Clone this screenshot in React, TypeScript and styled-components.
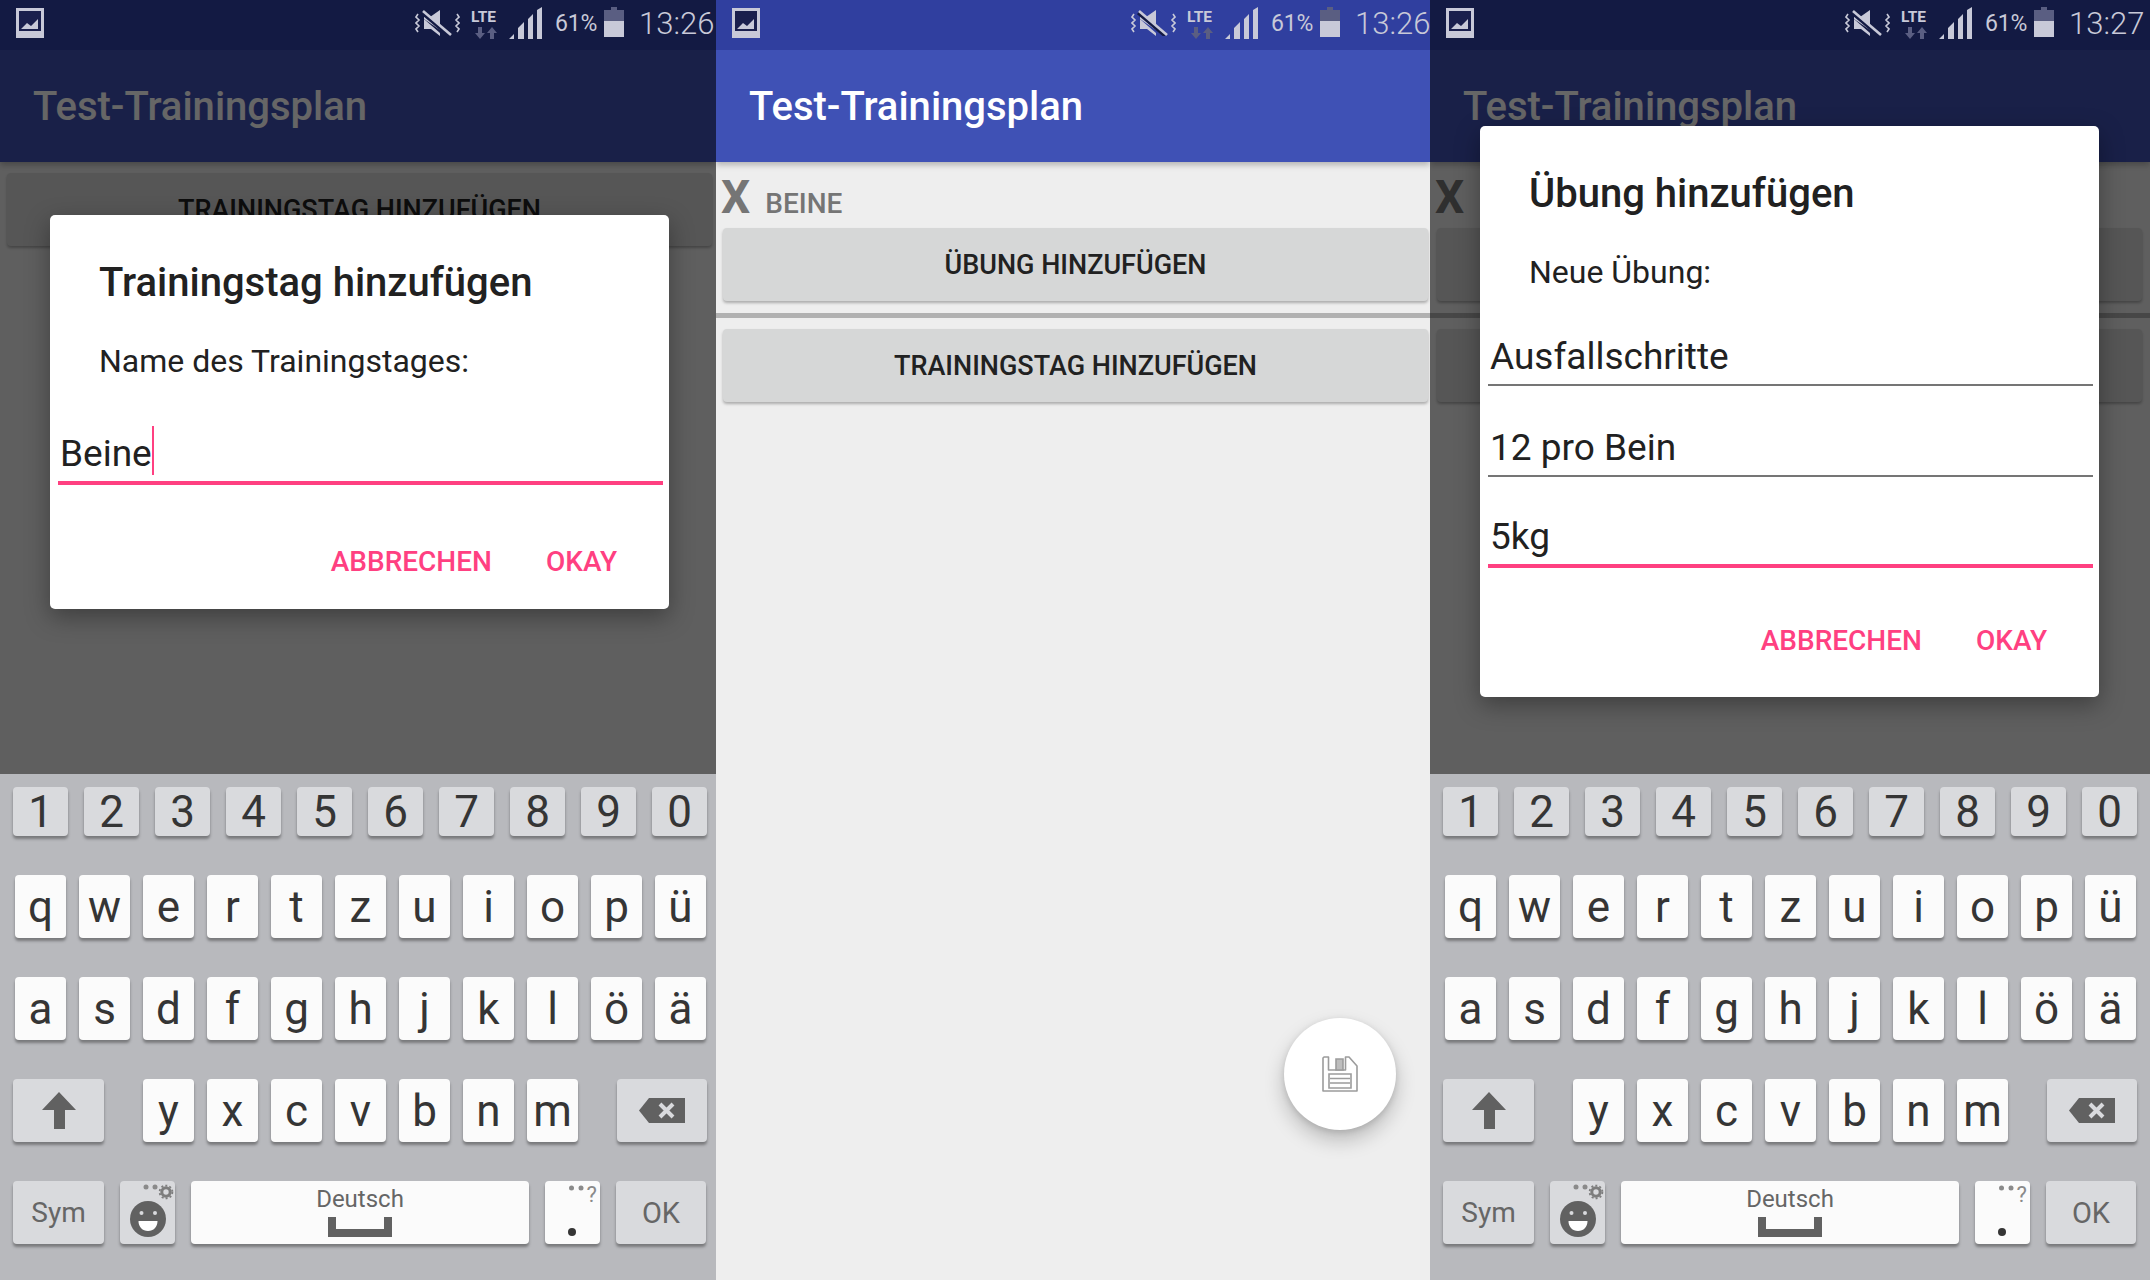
import React from "react";
import styled, { createGlobalStyle } from "styled-components";

const GlobalStyle = createGlobalStyle`
  html, body {
    margin: 0;
    padding: 0;
    background: #eeeeee;
  }
  * {
    box-sizing: border-box;
  }
`;

const PINK = "#ff4081";
const ICON = "#c8c9d8";
const ICON_DIM = "#5a5e82";
const KEY_ICON = "#616161";

const Page = styled.div`
  display: grid;
  grid-template-columns: 716px 714px 720px;
  width: 2150px;
  height: 1280px;
  overflow: hidden;
  font-family: Roboto, "Liberation Sans", sans-serif;
`;

const Phone = styled.div`
  display: flex;
  flex-direction: column;
  height: 1280px;
  overflow: hidden;
  background: #b8b9bd;
`;

const StatusBar = styled.div<{ $dim?: boolean }>`
  flex: 0 0 50px;
  display: flex;
  align-items: flex-start;
  width: 100%;
  padding-left: 16px;
  background: ${(p) => (p.$dim ? "#131a43" : "#303f9f")};
`;

const StatusRight = styled.div`
  display: flex;
  align-items: flex-start;
  width: 302px;
  margin-left: 371px;
  flex: none;
`;

const StatusIcon = styled.svg<{ $w: number; $h: number; $top: number; $left: number }>`
  flex: none;
  display: block;
  width: ${(p) => p.$w}px;
  height: ${(p) => p.$h}px;
  margin-top: ${(p) => p.$top}px;
  margin-left: ${(p) => p.$left}px;
`;

const Battery = styled.span`
  color: ${ICON};
  font-size: 23px;
  line-height: 27px;
  margin: 10px 0 0 13px;
  letter-spacing: -0.2px;
`;

const Clock = styled.span`
  color: ${ICON};
  font-size: 31px;
  font-weight: 300;
  line-height: 36px;
  margin: 6px 0 0 15px;
`;

const Screen = styled.div<{ $full?: boolean }>`
  position: relative;
  height: ${(p) => (p.$full ? 1230 : 724)}px;
  flex: none;
  overflow: hidden;
  background: #eeeeee;
`;

const AppBar = styled.div`
  height: 112px;
  padding-left: 33px;
  display: flex;
  align-items: center;
  background: #3f51b5;
  color: #ffffff;
  font-size: 40px;
  font-weight: 500;
  box-shadow: 0 3px 6px rgba(0, 0, 0, 0.25);
`;

const DayHeader = styled.div`
  height: 66px;
  padding: 0 0 0 5px;
  display: flex;
  align-items: flex-start;
  color: #757575;
  font-weight: 500;
`;

const RemoveMark = styled.span`
  font-size: 46px;
  font-weight: 700;
  line-height: 54px;
  margin-top: 8px;
`;

const DayName = styled.span`
  font-size: 28px;
  line-height: 32px;
  margin: 26px 0 0 15px;
`;

const Section = styled.div`
  padding: 0 4px 0 7px;
  width: 716px;
`;

const WideButton = styled.div`
  height: 73px;
  display: flex;
  align-items: center;
  justify-content: center;
  border-radius: 4px;
  background: #d6d7d7;
  color: #212121;
  font-size: 27px;
  font-weight: 500;
  box-shadow: 0 2px 3px rgba(0, 0, 0, 0.28);
`;

const Rule = styled.div`
  height: 5px;
  margin: 12px 0 11px;
  background: #b1b1b1;
`;

const Scrim = styled.div`
  position: absolute;
  inset: 0;
  background: rgba(0, 0, 0, 0.6);
`;

const Fab = styled.div`
  position: absolute;
  left: 568px;
  top: 968px;
  width: 112px;
  height: 112px;
  border-radius: 50%;
  background: #ffffff;
  display: flex;
  align-items: center;
  justify-content: center;
  box-shadow: 0 10px 20px rgba(0, 0, 0, 0.22), 0 2px 6px rgba(0, 0, 0, 0.12);
`;

const Dialog = styled.div<{ $top: number; $height: number }>`
  position: absolute;
  left: 50px;
  top: ${(p) => p.$top}px;
  width: 619px;
  height: ${(p) => p.$height}px;
  border-radius: 5px;
  background: #ffffff;
  box-shadow: 0 8px 24px rgba(0, 0, 0, 0.35);
`;

const DialogTitle = styled.div<{ $top: number }>`
  margin: ${(p) => p.$top}px 0 0 49px;
  color: #212121;
  font-size: 40px;
  font-weight: 500;
  line-height: 47px;
`;

const DialogMessage = styled.div<{ $top: number }>`
  margin: ${(p) => p.$top}px 0 0 49px;
  color: #212121;
  font-size: 32px;
  line-height: 38px;
`;

const Field = styled.div<{ $active?: boolean; $top: number; $height: number }>`
  position: relative;
  margin: ${(p) => p.$top}px 6px 0 8px;
  height: ${(p) => p.$height}px;
  padding: 0 0 0 2px;
  display: flex;
  align-items: flex-end;
  color: #212121;
  font-size: 37px;
  line-height: 44px;
  border-bottom: ${(p) => (p.$active ? `4px solid ${PINK}` : "2px solid #757575")};
`;

const FieldText = styled.span`
  position: relative;
  display: block;
  margin-bottom: 5px;
`;

const Caret = styled.span`
  position: absolute;
  right: -2px;
  top: -6px;
  width: 2px;
  height: 49px;
  background: ${PINK};
`;

const DialogActions = styled.div<{ $top: number }>`
  display: flex;
  justify-content: flex-end;
  gap: 54px;
  margin: ${(p) => p.$top}px 52px 0 0;
  color: ${PINK};
  font-size: 28px;
  font-weight: 500;
  line-height: 33px;
`;

const Keyboard = styled.div`
  flex: 1;
  display: flex;
  flex-direction: column;
  gap: 39px;
  width: 716px;
  padding: 13px 0 0;
  background: #b8b9bd;
`;

const KeyRow = styled.div<{ $left: number; $gap: number }>`
  display: flex;
  gap: ${(p) => p.$gap}px;
  padding-left: ${(p) => p.$left}px;
`;

const Key = styled.div<{ $w: number; $h?: number; $tone?: "light" | "grey"; $size?: number }>`
  position: relative;
  flex: none;
  width: ${(p) => p.$w}px;
  height: ${(p) => p.$h ?? 63}px;
  display: flex;
  align-items: center;
  justify-content: center;
  border-radius: 4px;
  background: ${(p) => (p.$tone === "grey" ? "#d9dadd" : "#fbfbfb")};
  color: ${(p) => (p.$size ? "#666666" : "#353535")};
  font-size: ${(p) => p.$size ?? 44}px;
  box-shadow: 0 3px 3px rgba(0, 0, 0, 0.35);
`;

const Spacer = styled.div<{ $w: number }>`
  flex: none;
  width: ${(p) => p.$w}px;
`;

const SpaceLabel = styled.div`
  display: flex;
  flex-direction: column;
  align-items: center;
  gap: 4px;
  color: #666666;
  font-size: 24px;
  line-height: 28px;
  margin-top: -3px;
`;

const KeyGlyph = styled.svg`
  display: block;
  flex: none;
`;

const QuestionMark = styled.span`
  position: absolute;
  right: 3px;
  top: 1px;
  color: #8a8a8a;
  font-size: 22px;
  line-height: 26px;
`;

const KeyDots = styled.svg`
  position: absolute;
  left: 0;
  top: 0;
`;

const ImageNote = () => (
  <StatusIcon $w={28} $h={30} $top={8} $left={0} viewBox="0 0 28 30">
    <path fill={ICON} d="M0 0h28v30H0z" />
    <path fill="#1a1f4d" d="M3 3h22v20H3z" />
    <path fill={ICON} d="M5 21l6-6 4 3 7-7v10z" />
  </StatusIcon>
);

const MuteVibrate = () => (
  <StatusIcon $w={45} $h={26} $top={10} $left={0} viewBox="0 0 45 26">
    <path fill="none" stroke={ICON} strokeWidth="1.6" d="M3 4l-2 3 3 3-3 3 3 3-3 3 2 3M42 4l2 3-3 3 3 3-3 3 3 3-2 3" />
    <path fill={ICON} d="M9 7h6l10-7v20L9 9z" />
    <path fill={ICON} d="M9 9l16 14v3l-9-7H9z" />
    <path stroke="#131a43" strokeWidth="3" d="M7 3l27 23" />
    <path stroke={ICON} strokeWidth="2.6" d="M8 1l28 24" />
  </StatusIcon>
);

const LteBadge = () => (
  <StatusIcon $w={32} $h={29} $top={10} $left={11} viewBox="0 0 32 29">
    <text x="0" y="12" fill={ICON} fontFamily="Roboto, sans-serif" fontWeight="700" fontSize="15.5">
      LTE
    </text>
    <path fill={ICON_DIM} d="M9 29l-5-6h3v-6h4v6h3zM21 17l5 6h-3v6h-4v-6h-3z" />
  </StatusIcon>
);

const Signal = () => (
  <StatusIcon $w={33} $h={32} $top={7} $left={6} viewBox="0 0 33 32">
    <path fill={ICON} d="M0 32l5-5v5zM9 32V21l6-6v17zM19 32V12l5-5v25zM28 32V3l5-3v32z" />
  </StatusIcon>
);

const BatteryIcon = () => (
  <StatusIcon $w={20} $h={30} $top={7} $left={7} viewBox="0 0 20 30">
    <path fill={ICON_DIM} d="M7 0h6v3h7v11H0V3h7z" />
    <path fill={ICON} d="M0 14h20v16H0z" />
  </StatusIcon>
);

const StatusRow = ({ dim, time }: { dim?: boolean; time: string }) => (
  <StatusBar $dim={dim}>
    <ImageNote />
    <StatusRight>
      <MuteVibrate />
      <LteBadge />
      <Signal />
      <Battery>61%</Battery>
      <BatteryIcon />
      <Clock>{time}</Clock>
    </StatusRight>
  </StatusBar>
);

const SaveIcon = () => (
  <svg width="36" height="36" viewBox="0 0 36 36" fill="none" stroke="#9c9c9c" strokeWidth="1.6">
    <path d="M2 1h4.5v13h17V1h3.5l8 9v25H1V2z" strokeLinejoin="round" />
    <path d="M14 3h7v11h-7z" fill="#bdbdbd" stroke="#9c9c9c" />
    <path d="M7 18h22v14H7zM8 22.5h20M8 27h20" />
  </svg>
);

const ShiftGlyph = () => (
  <KeyGlyph width="34" height="37" viewBox="0 0 34 37">
    <path fill={KEY_ICON} d="M17 0l17 18H23v19H12V18H0z" />
  </KeyGlyph>
);

const BackspaceGlyph = () => (
  <KeyGlyph width="46" height="25" viewBox="0 0 46 25">
    <path fill={KEY_ICON} d="M10 0h36v25H10L0 12.5z" />
    <path stroke="#d9dadd" strokeWidth="4" d="M21 6l13 13M34 6L21 19" />
  </KeyGlyph>
);

const SpaceBar = () => (
  <KeyGlyph width="64" height="20" viewBox="0 0 64 20">
    <path fill={KEY_ICON} d="M0 0h8v12h48V0h8v20H0z" />
  </KeyGlyph>
);

const EmojiGlyph = () => (
  <KeyDots width="55" height="63" viewBox="0 0 55 63">
    <circle cx="26" cy="6" r="2.5" fill="#8a8a8a" />
    <circle cx="35" cy="6" r="2.5" fill="#8a8a8a" />
    <circle cx="46" cy="11" r="4.2" fill="none" stroke="#7d7d7d" strokeWidth="3" />
    <circle cx="46" cy="11" r="6.4" fill="none" stroke="#7d7d7d" strokeWidth="1.8" strokeDasharray="2 2.1" />
    <circle cx="28" cy="38" r="18" fill={KEY_ICON} />
    <circle cx="21.5" cy="32" r="2" fill="#d9dadd" />
    <circle cx="35" cy="32" r="2" fill="#d9dadd" />
    <path fill="#ffffff" d="M18.5 40h19c0 6-4 10-9.500 10s-9.500-4-9.500-10z" />
  </KeyDots>
);

const PeriodGlyph = () => (
  <KeyDots width="55" height="63" viewBox="0 0 55 63">
    <circle cx="26.500" cy="7" r="2.500" fill="#8a8a8a" />
    <circle cx="36" cy="7" r="2.500" fill="#8a8a8a" />
    <circle cx="27" cy="51" r="4" fill="#353535" />
  </KeyDots>
);

const DIGITS = "1234567890".split("");
const ROW_ONE = "qwertzuiopü".split("");
const ROW_TWO = "asdfghjklöä".split("");
const ROW_THREE = "yxcvbnm".split("");

const KeyboardPanel = () => (
  <Keyboard>
    <KeyRow $left={13} $gap={16}>
      {DIGITS.map((d) => (
        <Key key={d} $w={55} $h={49} $tone="grey">
          {d}
        </Key>
      ))}
    </KeyRow>
    <KeyRow $left={15} $gap={13}>
      {ROW_ONE.map((c) => (
        <Key key={c} $w={51}>
          {c}
        </Key>
      ))}
    </KeyRow>
    <KeyRow $left={15} $gap={13}>
      {ROW_TWO.map((c) => (
        <Key key={c} $w={51}>
          {c}
        </Key>
      ))}
    </KeyRow>
    <KeyRow $left={13} $gap={13}>
      <Key $w={91} $tone="grey">
        <ShiftGlyph />
      </Key>
      <Spacer $w={13} />
      {ROW_THREE.map((c) => (
        <Key key={c} $w={51}>
          {c}
        </Key>
      ))}
      <Spacer $w={13} />
      <Key $w={90} $tone="grey">
        <BackspaceGlyph />
      </Key>
    </KeyRow>
    <KeyRow $left={13} $gap={16}>
      <Key $w={91} $tone="grey" $size={28}>
        Sym
      </Key>
      <Key $w={55} $tone="grey">
        <EmojiGlyph />
      </Key>
      <Key $w={338} $size={24}>
        <SpaceLabel>
          Deutsch
          <SpaceBar />
        </SpaceLabel>
      </Key>
      <Key $w={55}>
        <PeriodGlyph />
        <QuestionMark>?</QuestionMark>
      </Key>
      <Key $w={90} $tone="grey" $size={29}>
        OK
      </Key>
    </KeyRow>
  </Keyboard>
);

const DayContent = () => (
  <>
    <DayHeader>
      <RemoveMark>X</RemoveMark>
      <DayName>BEINE</DayName>
    </DayHeader>
    <Section>
      <WideButton>ÜBUNG HINZUFÜGEN</WideButton>
    </Section>
    <Rule />
    <Section>
      <WideButton>TRAININGSTAG HINZUFÜGEN</WideButton>
    </Section>
  </>
);

const App = () => (
  <>
    <GlobalStyle />
    <Page>
      <Phone>
        <StatusRow dim time="13:26" />
        <Screen>
          <AppBar>Test-Trainingsplan</AppBar>
          <Section style={{ paddingTop: 11 }}>
            <WideButton>TRAININGSTAG HINZUFÜGEN</WideButton>
          </Section>
          <Scrim />
          <Dialog $top={165} $height={394}>
            <DialogTitle $top={44}>Trainingstag hinzufügen</DialogTitle>
            <DialogMessage $top={36}>Name des Trainingstages:</DialogMessage>
            <Field $active $top={34} $height={71}>
              <FieldText>
                Beine
                <Caret />
              </FieldText>
            </Field>
            <DialogActions $top={60}>
              <span>ABBRECHEN</span>
              <span>OKAY</span>
            </DialogActions>
          </Dialog>
        </Screen>
        <KeyboardPanel />
      </Phone>

      <Phone>
        <StatusRow time="13:26" />
        <Screen $full>
          <AppBar>Test-Trainingsplan</AppBar>
          <DayContent />
          <Fab>
            <SaveIcon />
          </Fab>
        </Screen>
      </Phone>

      <Phone>
        <StatusRow dim time="13:27" />
        <Screen>
          <AppBar>Test-Trainingsplan</AppBar>
          <DayContent />
          <Scrim />
          <Dialog $top={76} $height={571}>
            <DialogTitle $top={44}>Übung hinzufügen</DialogTitle>
            <DialogMessage $top={36}>Neue Übung:</DialogMessage>
            <Field $top={24} $height={71}>
              <FieldText>Ausfallschritte</FieldText>
            </Field>
            <Field $top={20} $height={71}>
              <FieldText>12 pro Bein</FieldText>
            </Field>
            <Field $active $top={20} $height={71}>
              <FieldText>5kg</FieldText>
            </Field>
            <DialogActions $top={56}>
              <span>ABBRECHEN</span>
              <span>OKAY</span>
            </DialogActions>
          </Dialog>
        </Screen>
        <KeyboardPanel />
      </Phone>
    </Page>
  </>
);

export default App;
